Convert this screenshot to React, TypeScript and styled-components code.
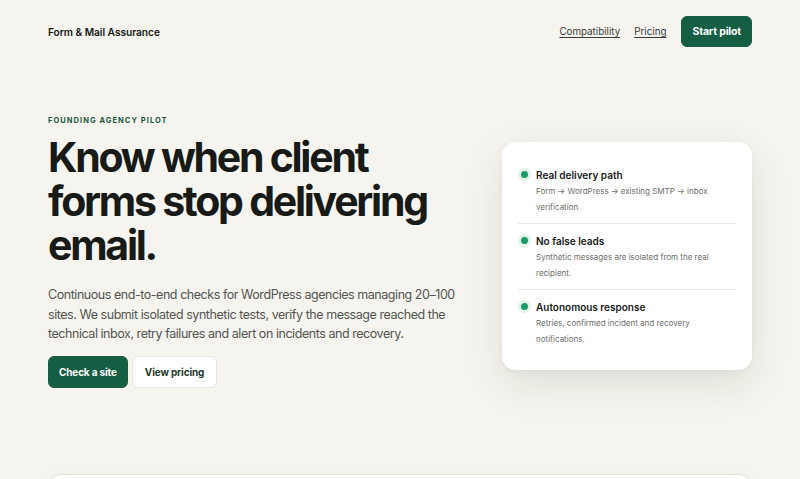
import React from 'react';
import styled, { createGlobalStyle } from 'styled-components';

const GlobalStyle = createGlobalStyle`
  html, body {
    margin: 0;
    padding: 0;
    background: #f5f4ee;
  }
  body {
    font-family: Inter, 'Noto Sans', sans-serif;
    color: #171a17;
    -webkit-font-smoothing: antialiased;
  }
`;

const features = [
  {
    title: 'Real delivery path',
    text: 'Form → WordPress → existing SMTP → inbox verification',
  },
  {
    title: 'No false leads',
    text: 'Synthetic messages are isolated from the real recipient.',
  },
  {
    title: 'Autonomous response',
    text: 'Retries, confirmed incident and recovery notifications.',
  },
];

const App: React.FC = () => {
  return (
    <Page>
      <GlobalStyle />
      <Header>
        <Brand>Form &amp; Mail Assurance</Brand>
        <Nav>
          <NavLink href="#">Compatibility</NavLink>
          <NavLink href="#">Pricing</NavLink>
          <Button $variant="primary" $size="sm">Start pilot</Button>
        </Nav>
      </Header>

      <Hero>
        <HeroCopy>
          <Eyebrow>Founding agency pilot</Eyebrow>
          <Title>Know when client forms stop delivering email.</Title>
          <Lead>
            Continuous end-to-end checks for WordPress agencies managing 20–100 sites. We submit
            isolated synthetic tests, verify the message reached the technical inbox, retry
            failures and alert on incidents and recovery.
          </Lead>
          <Actions>
            <Button $variant="primary">Check a site</Button>
            <Button $variant="secondary">View pricing</Button>
          </Actions>
        </HeroCopy>

        <Card>
          {features.map((f, i) => (
            <Feature key={f.title} $first={i === 0}>
              <Dot />
              <div>
                <FeatureTitle>{f.title}</FeatureTitle>
                <FeatureText>{f.text}</FeatureText>
              </div>
            </Feature>
          ))}
        </Card>
      </Hero>

      <NextSection />
    </Page>
  );
};

const Page = styled.div`
  height: 100vh;
  padding: 0 48px;
  box-sizing: border-box;
  overflow: hidden;
`;

const Header = styled.header`
  display: flex;
  align-items: center;
  justify-content: space-between;
  height: 63px;
`;

const Brand = styled.div`
  font-size: 10.2px;
  font-weight: 600;
  letter-spacing: -0.005em;
`;

const Nav = styled.nav`
  display: flex;
  align-items: center;
  gap: 14px;
`;

const NavLink = styled.a`
  font-size: 9.8px;
  color: #3a3d3a;
  text-decoration: underline;
  text-underline-offset: 2px;
  text-decoration-thickness: 1px;
`;

const Button = styled.button<{ $variant: 'primary' | 'secondary'; $size?: 'sm' }>`
  font-family: Inter, sans-serif;
  font-size: ${(p) => (p.$size === 'sm' ? '10.5px' : '10px')};
  font-weight: 700;
  height: ${(p) => (p.$size === 'sm' ? '31px' : '32px')};
  padding: 0 ${(p) => (p.$variant === 'secondary' ? '12px' : '10px')};
  border-radius: 6px;
  cursor: pointer;
  letter-spacing: -0.015em;
  border: 1px solid ${(p) => (p.$variant === 'primary' ? '#155d43' : '#e6e5df')};
  background: ${(p) => (p.$variant === 'primary' ? '#155d43' : '#ffffff')};
  color: ${(p) => (p.$variant === 'primary' ? '#ffffff' : '#1f3a2e')};
  ${(p) => p.$size === 'sm' && 'margin-left: 1px;'}
`;

const Hero = styled.section`
  display: grid;
  grid-template-columns: 1fr 250px;
  align-items: center;
  gap: 40px;
  padding-top: 53px;
`;

const HeroCopy = styled.div`
  display: flex;
  flex-direction: column;
`;

const Eyebrow = styled.div`
  font-size: 7.5px;
  line-height: 9px;
  font-weight: 700;
  letter-spacing: 0.14em;
  text-transform: uppercase;
  color: #1d5a42;
  margin-bottom: 10px;
`;

const Title = styled.h1`
  margin: 0;
  font-size: 41px;
  line-height: 44px;
  font-weight: 700;
  letter-spacing: -0.055em;
  color: #171a17;
  max-width: 400px;
`;

const Lead = styled.p`
  margin: 18px 0 0;
  font-size: 12.5px;
  line-height: 19.5px;
  letter-spacing: -0.45px;
  color: #545652;
  max-width: 412px;
`;

const Actions = styled.div`
  display: flex;
  gap: 4px;
  margin-top: 12px;
`;

const Card = styled.div`
  background: #ffffff;
  border-radius: 14px;
  padding: 16px 16px 23px;
  margin-top: 8px;
  box-shadow: 0 14px 40px rgba(30, 30, 20, 0.1), 0 2px 6px rgba(30, 30, 20, 0.04);
`;

const Feature = styled.div<{ $first: boolean }>`
  display: grid;
  grid-template-columns: 18px 1fr;
  padding: 10px 0 8px 0;
  border-top: ${(p) => (p.$first ? 'none' : '1px solid #ecebe6')};
  &:last-child {
    padding-bottom: 0;
  }
`;

const Dot = styled.span`
  width: 7px;
  height: 7px;
  border-radius: 50%;
  background: #1e9a6a;
  box-shadow: 0 0 0 3px #e2f3ea;
  margin: 3px 0 0 3px;
`;

const FeatureTitle = styled.div`
  font-size: 10px;
  font-weight: 600;
  color: #171a17;
  line-height: 14px;
`;

const FeatureText = styled.div`
  font-size: 8px;
  line-height: 16px;
  color: #6c6e6a;
  margin-top: 1px;
`;

const NextSection = styled.div`
  margin-top: 86px;
  height: 80px;
  background: #ffffff;
  border: 1px solid #e4e3dd;
  border-radius: 14px;
  box-shadow: 0 8px 24px rgba(30, 30, 20, 0.06);
`;

export default App;
